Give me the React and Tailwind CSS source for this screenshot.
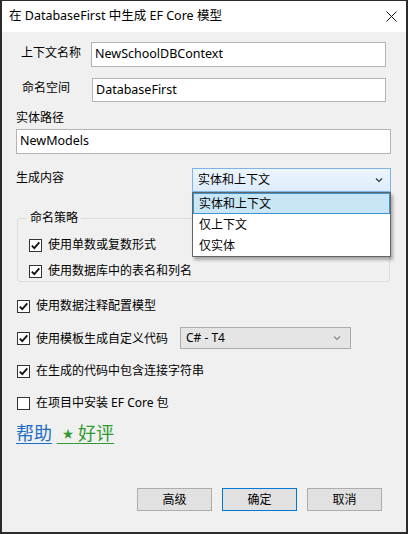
import React from "react";

const FONT = { fontFamily: "'Noto Sans', 'Noto Sans CJK SC', sans-serif" };

// ─── Small pieces ─────────────────────────────────────────────────────────────
function CheckBox({ checked }) {
  return (
    <span className="w-[13px] h-[13px] shrink-0 border border-[#333333] bg-white flex items-center justify-center">
      {checked && (
        <svg width="11" height="11" viewBox="0 0 11 11">
          <path d="M1.8 5.6 L4.3 8.2 L9.3 2.4" fill="none" stroke="#111" strokeWidth="1.8" />
        </svg>
      )}
    </span>
  );
}

function Chevron({ color = "#333" }) {
  return (
    <svg width="8" height="6" viewBox="0 0 8 6">
      <path d="M1 1.5 L4 4.5 L7 1.5" fill="none" stroke={color} strokeWidth="1.2" />
    </svg>
  );
}

function CheckRow({ checked, label, className = "" }) {
  return (
    <div className={"flex items-center h-[16px] gap-[6px] " + className}>
      <CheckBox checked={checked} />
      <span className="text-[12px] leading-[16px] text-black whitespace-nowrap">{label}</span>
    </div>
  );
}

function TextBox({ value, className = "" }) {
  return (
    <div className={"bg-white border border-[#b4b4b4] flex items-center pl-[3px] text-[12.5px] text-black " + className}>
      {value}
    </div>
  );
}

function Btn({ label, primary }) {
  return (
    <button
      className={[
        "w-[75px] h-[23px] bg-[#e1e1e1] border text-[12px] text-black flex items-center justify-center",
        primary ? "border-[#0078d7]" : "border-[#adadad]",
      ].join(" ")}
    >
      {label}
    </button>
  );
}

// ─── Main ─────────────────────────────────────────────────────────────────────
export default function App() {
  return (
    <div
      className="w-[408px] h-[534px] border-t border-l-2 border-r-2 border-b-2 border-[#2b2b2b] flex flex-col bg-[#f0f0f0] overflow-hidden"
      style={FONT}
    >
      {/* Title bar */}
      <div className="h-[31px] bg-white flex items-center justify-between pl-[7px] pr-[9px] shrink-0">
        <span className="text-[12.5px] text-black">在 DatabaseFirst 中生成 EF Core 模型</span>
        <svg width="11" height="11" viewBox="0 0 11 11">
          <path d="M0.5 0.5 L10.5 10.5 M10.5 0.5 L0.5 10.5" stroke="#111" strokeWidth="1" />
        </svg>
      </div>

      {/* Body */}
      <div className="flex-1 flex flex-col pl-[14px] pr-[15px] pb-[21px]">
        <div className="flex h-[25px] mt-[10px] mr-[5px]">
          <div className="w-[75px] pl-[5px] pt-[3px] text-[12px] leading-[16px] text-black">上下文名称</div>
          <TextBox value="NewSchoolDBContext" className="flex-1" />
        </div>

        <div className="flex h-[24px] mt-[11px] mr-[5px]">
          <div className="w-[76px] pl-[6px] pt-[2px] text-[12px] leading-[16px] text-black">命名空间</div>
          <TextBox value="DatabaseFirst" className="flex-1" />
        </div>

        <div className="mt-[8px] h-[16px] text-[12px] leading-[16px] text-black">实体路径</div>
        <TextBox value="NewModels" className="mt-[3px] h-[25px]" />

        {/* 生成内容 */}
        <div className="flex items-start mt-[14px] h-[24px]">
          <div className="pt-[2px] text-[12px] leading-[16px] text-black">生成内容</div>
          <div className="relative ml-auto w-[199px] h-[24px]">
            <div className="h-full border border-[#7eb4ea] bg-gradient-to-b from-[#edf5fd] to-[#dcecfc] flex items-center justify-between pl-[5px] pr-[7px] text-[12px] text-black">
              <span>实体和上下文</span>
              <Chevron />
            </div>
            <div className="absolute left-0 top-[24px] w-[199px] bg-white border border-[#646464] shadow-[2px_3px_3px_rgba(0,0,0,0.3)] z-10 flex flex-col text-[12px] text-black">
              <div className="h-[21px] flex items-center pl-[5px] bg-[#c9e6f6] border border-[#3d95cf]">实体和上下文</div>
              <div className="h-[21px] flex items-center pl-[6px]">仅上下文</div>
              <div className="h-[21px] flex items-center pl-[6px]">仅实体</div>
            </div>
          </div>
        </div>

        {/* 命名策略 */}
        <fieldset className="mt-[18px] mx-[1px] border border-[#dcdcdc] rounded-[3px] pl-[11px] pb-[2px]">
          <legend className="ml-[-2px] px-[3px] text-[12px] leading-[16px] text-black">命名策略</legend>
          <CheckRow checked label="使用单数或复数形式" className="mt-[11px]" />
          <CheckRow checked label="使用数据库中的表名和列名" className="mt-[10px]" />
        </fieldset>

        <CheckRow checked label="使用数据注释配置模型" className="mt-[16px] ml-[1px]" />

        <div className="flex items-center h-[22px] mt-[13px] ml-[1px]">
          <CheckBox checked />
          <span className="w-[150px] pl-[6px] text-[12px] leading-[16px] text-black whitespace-nowrap mt-[2px]">使用模板生成自定义代码</span>
          <div className="w-[171px] h-[22px] bg-[#e5e5e5] border border-[#acacac] flex items-center justify-between pl-[5px] pr-[9px] text-[12px] text-black">
            <span>C# - T4</span>
            <Chevron color="#888" />
          </div>
        </div>

        <CheckRow checked label="在生成的代码中包含连接字符串" className="mt-[14px] ml-[1px]" />
        <CheckRow label="在项目中安装 EF Core 包" className="mt-[16px] ml-[1px]" />

        <div className="mt-[11px] h-[22px] text-[18px] leading-[22px] whitespace-pre">
          <a className="text-[#1a6fc4] underline underline-offset-[3px]">帮助</a>
          <span> </span>
          <a className="text-[#2f9a2f] underline underline-offset-[3px]">
            <span className="text-[11px] align-[2px]">  ★</span> 好评
          </a>
        </div>

        <div className="mt-auto flex justify-end gap-[10px] mr-[9px]">
          <Btn label="高级" />
          <Btn label="确定" primary />
          <Btn label="取消" />
        </div>
      </div>
    </div>
  );
}
